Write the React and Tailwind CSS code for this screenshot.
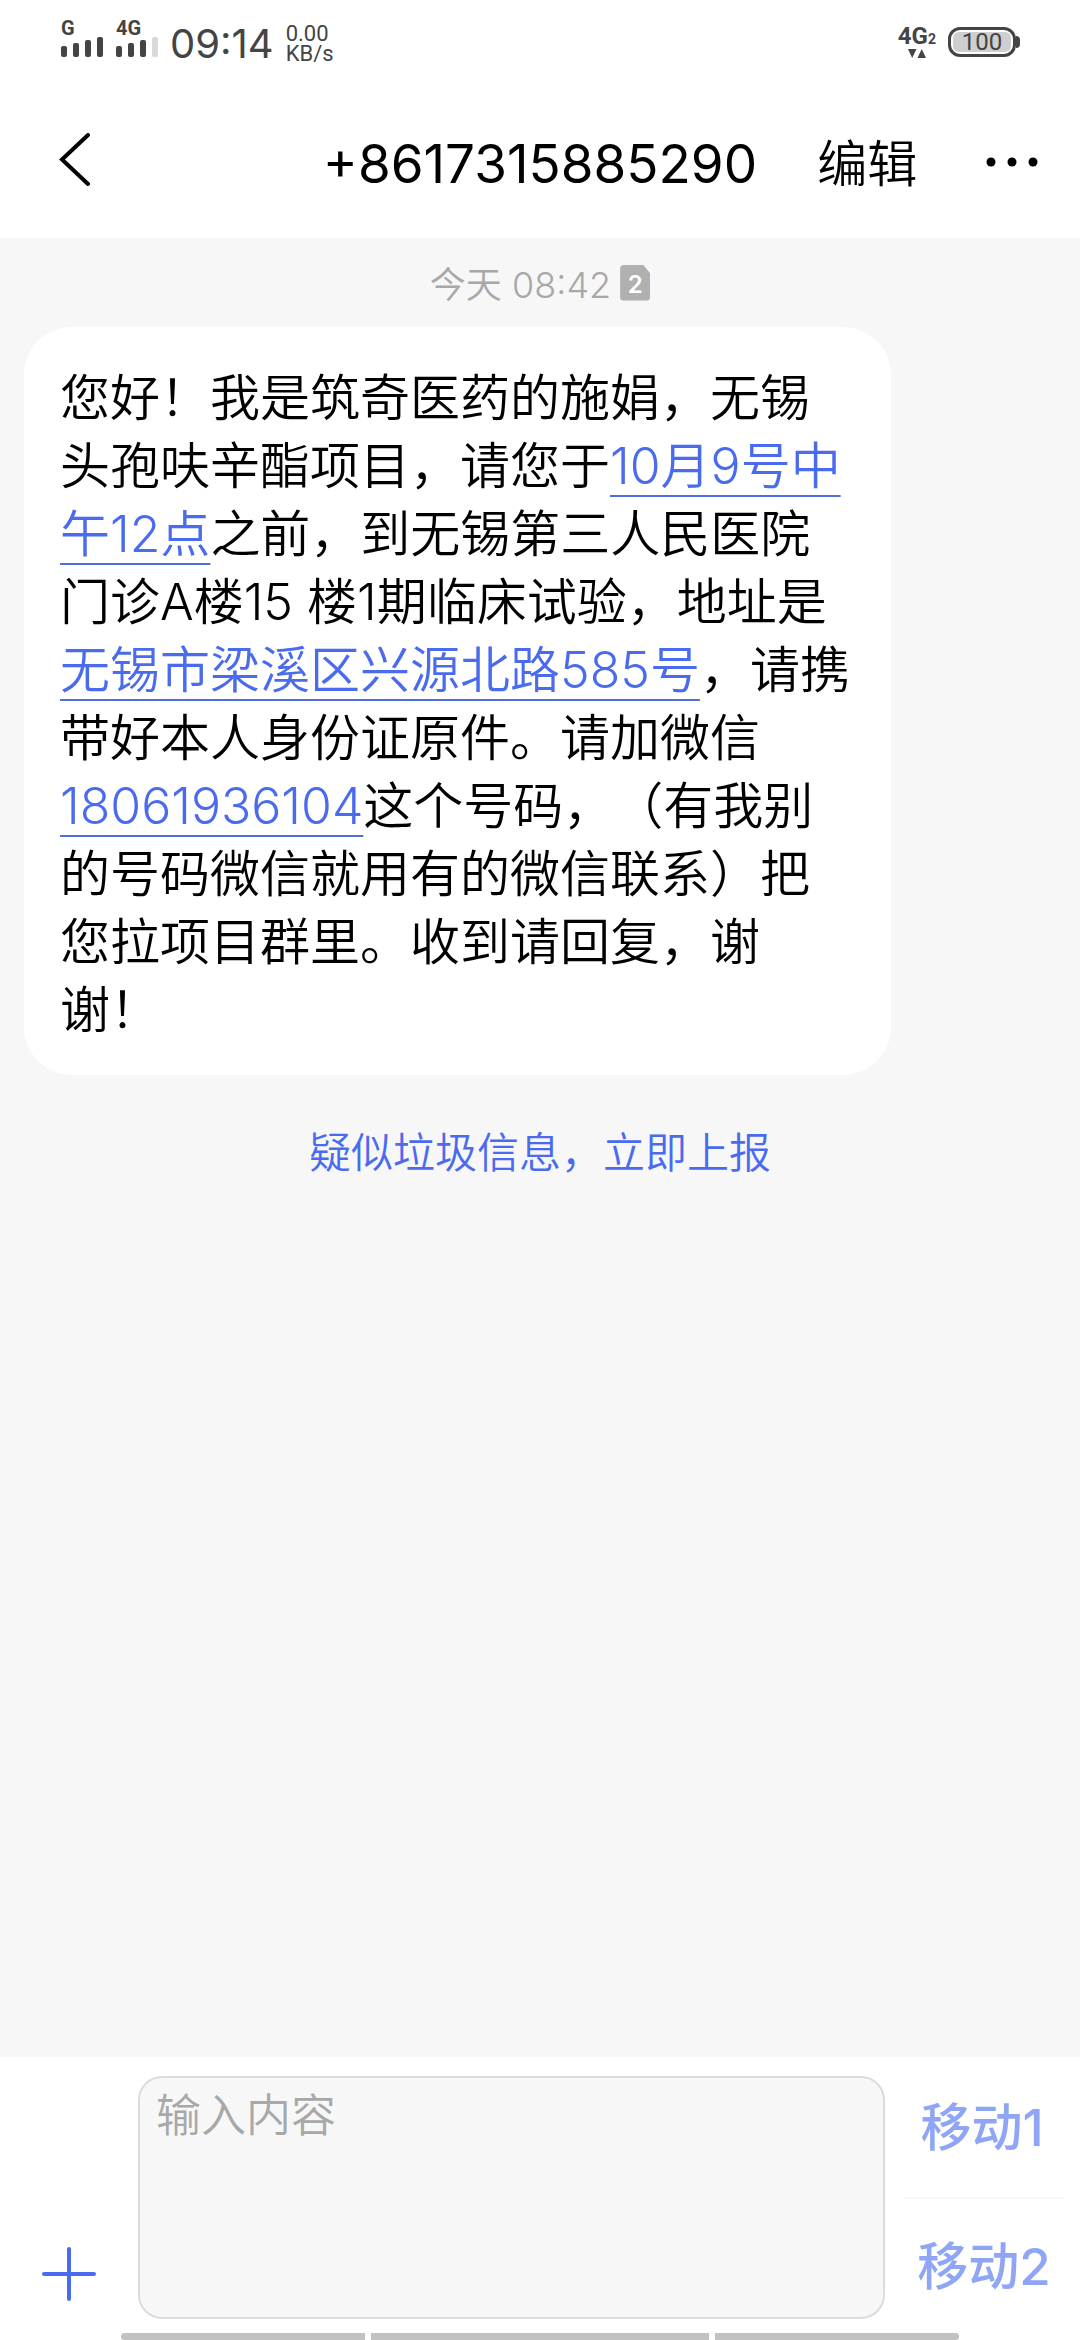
const LINK =
  "text-[#4a6bee] underline decoration-[#4f6fe0] decoration-2 underline-offset-[11px]";

function SignalBars({ label, weak }) {
  return (
    <div className="flex flex-col">
      <span className="h-4 font-[Roboto] text-xl leading-4 font-bold">{label}</span>
      <svg width="42" height="21" viewBox="0 0 42 21" fill="currentColor" aria-hidden="true">
        <rect x="0" y="10" width="6" height="11" rx="2" />
        <rect x="12" y="7" width="6" height="14" rx="2" />
        <rect x="24" y="4" width="6" height="17" rx="2" />
        <rect x="36" y="1" width="6" height="20" rx="2" fill={weak ? "#d9d9d9" : "currentColor"} />
      </svg>
    </div>
  );
}

function StatusBar() {
  return (
    <div className="flex h-[86px] items-start justify-between pt-5 pr-[60px] pl-[61px] text-[#444]">
      <div className="flex items-start">
        <div className="flex gap-[13px]">
          <SignalBars label="G" />
          <SignalBars label="4G" weak />
        </div>
        <span className="ml-3 pt-1 text-[40px] leading-[40px]">09:14</span>
        <div className="ml-3 flex flex-col pt-1 font-[Roboto] text-[22px] leading-[20px]">
          <span>0.00</span>
          <span>KB/s</span>
        </div>
      </div>
      <div className="flex items-start gap-3 pt-[7px]">
        <div className="flex flex-col items-center">
          <span className="flex items-end font-[Roboto] text-2xl leading-[18px] font-bold">
            4G<span className="text-sm leading-3">2</span>
          </span>
          <svg className="mt-1" width="18" height="9" viewBox="0 0 18 9" fill="currentColor" aria-hidden="true">
            <path d="M0 0h8.500L4.200 9z" />
            <path d="M9.500 9H18L13.700 0z" />
          </svg>
        </div>
        <div className="flex items-center">
          <div className="flex h-[30px] w-[68px] rounded-xl border-3 border-[#444] p-[2px]">
            <span className="flex flex-1 items-center justify-center rounded-md bg-[#cfcfcf] font-[Roboto] text-2xl leading-5">
              100
            </span>
          </div>
          <div className="h-3 w-1 rounded-r-sm bg-[#444]" />
        </div>
      </div>
    </div>
  );
}

function Header() {
  return (
    <header className="grid h-[152px] grid-cols-[1fr_auto_1fr] items-center px-[42px] pt-1 text-black">
      <button type="button" aria-label="返回" className="ml-4 justify-self-start pb-2">
        <svg width="32" height="54" viewBox="0 0 32 54" fill="none" stroke="currentColor" strokeWidth="4" strokeLinecap="round">
          <path d="M30 2 4 26.500 30 51" />
        </svg>
      </button>
      <h1 className="text-[53px] leading-[60px]">+8617315885290</h1>
      <div className="flex items-center justify-between pl-[60px]">
        <button type="button" className="text-[50px] leading-[60px] font-[350]">编辑</button>
        <button type="button" aria-label="更多" className="pb-1">
          <svg width="52" height="10" viewBox="0 0 52 10" fill="currentColor">
            <circle cx="5" cy="5" r="4.500" />
            <circle cx="26" cy="5" r="4.500" />
            <circle cx="47" cy="5" r="4.500" />
          </svg>
        </button>
      </div>
    </header>
  );
}

function Conversation() {
  return (
    <main className="flex flex-1 flex-col bg-[#f7f7f7]">
      <div className="flex h-[89px] items-center justify-center gap-[9px] text-4xl font-[350] text-[#a8a8a8]">
        <span className="pt-1">今天 08:42</span>
        <span className="flex h-9 w-[30px] items-center justify-center rounded-sm bg-[#b0b0b0] pt-1 text-2xl font-semibold text-white [clip-path:polygon(0_0,76%_0,100%_24%,100%_100%,0_100%)]">
          2
        </span>
      </div>
      <p className="mr-[189px] ml-6 rounded-[48px] bg-white px-9 pt-[37px] pb-[31px] text-[50px] leading-[68px] font-[350] text-black [text-spacing-trim:space-all]">
        您好！我是筑奇医药的施娟，无锡头孢呋辛酯项目，请您于
        <a href="#date" className={LINK}>10月9号中午12点</a>
        之前，到无锡第三人民医院门诊A楼15 楼1期临床试验，地址是
        <a href="#address" className={LINK}>无锡市梁溪区兴源北路585号</a>
        ，请携带好本人身份证原件。请加微信
        <a href="#phone" className={LINK}>18061936104</a>
        这个号码，（有我别的号码微信就用有的微信联系）把您拉项目群里。收到请回复，谢谢！
      </p>
      <a href="#report" className="mt-12 self-center text-[42px] leading-[60px] font-[350] text-[#4a6bee]">
        疑似垃圾信息，立即上报
      </a>
    </main>
  );
}

function Composer() {
  return (
    <footer className="bg-white pt-[19px]">
      <div className="flex h-[243px]">
        <button type="button" aria-label="添加" className="flex w-[138px] items-end justify-center pb-[18px]">
          <svg width="54" height="54" viewBox="0 0 54 54" fill="none" stroke="#4a6bee" strokeWidth="4" strokeLinecap="round">
            <path d="M27 2v50M2 27h50" />
          </svg>
        </button>
        <textarea
          aria-label="输入内容"
          placeholder="输入内容"
          className="min-w-0 flex-1 resize-none rounded-3xl border-2 border-[#dcdcdc] bg-[#f7f7f7] px-4 py-[6px] text-[45px] leading-[64px] font-[350] outline-none placeholder:text-[#a8a8a8]"
        />
        <div className="mr-4 ml-[19px] flex w-[160px] flex-col text-[51px] leading-[60px] font-medium text-[#8fa5f5]">
          <button type="button" className="flex-1 border-b-2 border-[#f7f7f7] pr-1 pb-4">移动1</button>
          <button type="button" className="flex-1 pt-4">移动2</button>
        </div>
      </div>
      <div className="mx-[121px] mt-[14px] flex h-[7px] gap-[6px] overflow-hidden rounded-full">
        <div className="flex-1 bg-[#c2c2c2]" />
        <div className="w-[338px] bg-[#c2c2c2]" />
        <div className="flex-1 bg-[#c2c2c2]" />
      </div>
    </footer>
  );
}

export default function App() {
  return (
    <div className="flex min-h-screen flex-col bg-white font-['Inter','Noto_Sans_CJK_SC',sans-serif]" lang="zh-CN">
      <StatusBar />
      <Header />
      <Conversation />
      <Composer />
    </div>
  );
}
